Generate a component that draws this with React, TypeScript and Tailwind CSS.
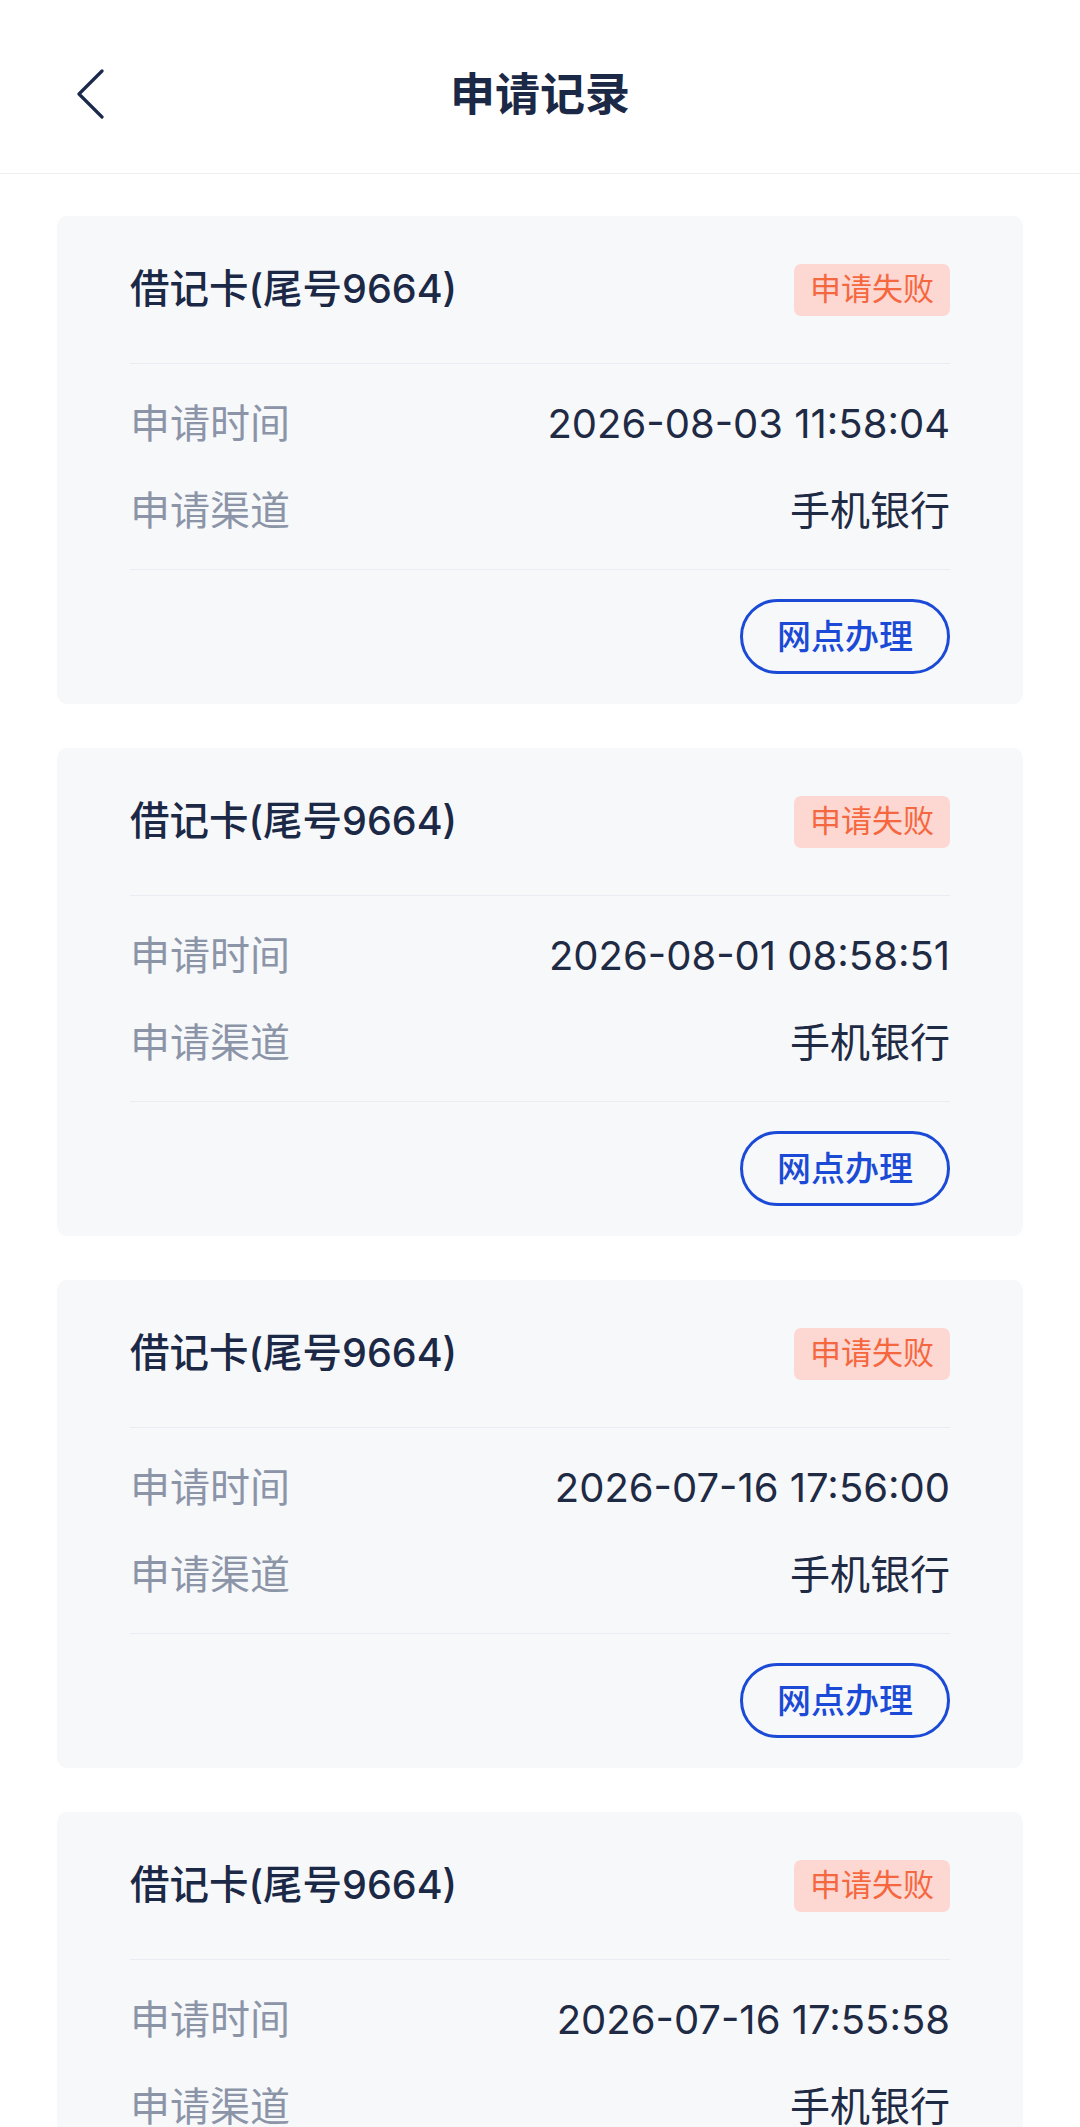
import React from "react"

type Record = {
  card: string
  status: string
  time: string
  channel: string
}

const records: Record[] = [
  { card: "借记卡(尾号9664)", status: "申请失败", time: "2026-08-03 11:58:04", channel: "手机银行" },
  { card: "借记卡(尾号9664)", status: "申请失败", time: "2026-08-01 08:58:51", channel: "手机银行" },
  { card: "借记卡(尾号9664)", status: "申请失败", time: "2026-07-16 17:56:00", channel: "手机银行" },
  { card: "借记卡(尾号9664)", status: "申请失败", time: "2026-07-16 17:55:58", channel: "手机银行" },
]

function BackIcon() {
  return (
    <svg width="30" height="52" viewBox="0 0 30 52" fill="none" aria-hidden="true">
      <path
        d="M26 2 L3 25 L26 48"
        stroke="#1b2a4c"
        strokeWidth="3.2"
        strokeLinecap="round"
        strokeLinejoin="round"
      />
    </svg>
  )
}

function RecordCard({ item }: { item: Record }) {
  return (
    <div className="rounded-[10px] bg-[#f7f8fa] px-[73px]">
      <div className="flex h-[148px] items-center justify-between border-b border-[#e9ecf2]">
        <div className="text-[39.5px] font-medium text-[#1b2846]">{item.card}</div>
        <div className="flex h-[52px] items-center rounded-[7px] bg-[#fdd8d2] px-[16px] text-[31px] text-[#f5673f]">
          {item.status}
        </div>
      </div>

      <div className="border-b border-[#e9ecf2] pt-[16px] pb-[15px]">
        <div className="flex h-[87px] items-center justify-between">
          <span className="text-[40px] text-[#8c95a8]">申请时间</span>
          <span className="text-[40px] text-[#1f2a44]">{item.time}</span>
        </div>
        <div className="flex h-[87px] items-center justify-between">
          <span className="text-[40px] text-[#8c95a8]">申请渠道</span>
          <span className="text-[40px] text-[#1f2a44]">{item.channel}</span>
        </div>
      </div>

      <div className="flex justify-end pt-[29px] pb-[30px]">
        <button className="flex h-[75px] items-center rounded-full border-[3px] border-[#1a4ad6] px-[34px] text-[34px] font-medium text-[#1a4ad6]">
          网点办理
        </button>
      </div>
    </div>
  )
}

export default function App() {
  return (
    <div className="min-h-screen bg-white font-['Inter','Noto_Sans_CJK_SC',sans-serif]">
      {/* nav bar */}
      <div className="grid h-[174px] grid-cols-[1fr_auto_1fr] items-center border-b border-[#eeeff3] pt-[16px]">
        <div className="pl-[76px]">
          <BackIcon />
        </div>
        <div className="text-[45px] font-semibold text-[#1b2846]">申请记录</div>
        <div />
      </div>

      <div className="flex flex-col gap-[44px] px-[57px] pt-[42px] pb-[40px]">
        {records.map((item, i) => (
          <RecordCard key={i} item={item} />
        ))}
      </div>
    </div>
  )
}
